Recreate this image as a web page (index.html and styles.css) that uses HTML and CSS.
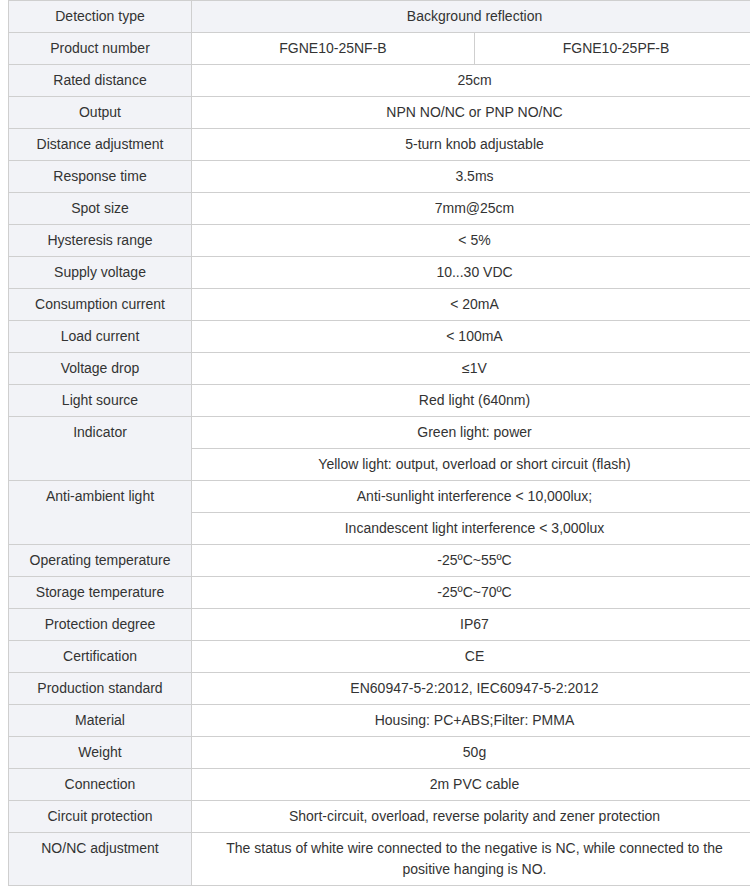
FILE: index.html
```html
<!DOCTYPE html>
<html>
<head>
<meta charset="utf-8">
<link rel="stylesheet" href="styles.css">
</head>
<body>
<table class="spec">
<colgroup><col class="c1"><col class="c2"><col class="c3"></colgroup>
<tbody>
<tr class="head"><td class="k">Detection type</td><td colspan="2">Background reflection</td></tr>
<tr><td class="k">Product number</td><td>FGNE10-25NF-B</td><td>FGNE10-25PF-B</td></tr>
<tr><td class="k">Rated distance</td><td colspan="2">25cm</td></tr>
<tr><td class="k">Output</td><td colspan="2">NPN NO/NC or PNP NO/NC</td></tr>
<tr><td class="k">Distance adjustment</td><td colspan="2">5-turn knob adjustable</td></tr>
<tr><td class="k">Response time</td><td colspan="2">3.5ms</td></tr>
<tr><td class="k">Spot size</td><td colspan="2">7mm@25cm</td></tr>
<tr><td class="k">Hysteresis range</td><td colspan="2">&lt; 5%</td></tr>
<tr><td class="k">Supply voltage</td><td colspan="2">10...30 VDC</td></tr>
<tr><td class="k">Consumption current</td><td colspan="2">&lt; 20mA</td></tr>
<tr><td class="k">Load current</td><td colspan="2">&lt; 100mA</td></tr>
<tr><td class="k">Voltage drop</td><td colspan="2">≤1V</td></tr>
<tr><td class="k">Light source</td><td colspan="2">Red light (640nm)</td></tr>
<tr><td class="k" rowspan="2">Indicator</td><td colspan="2">Green light: power</td></tr>
<tr><td colspan="2">Yellow light: output, overload or short circuit (flash)</td></tr>
<tr><td class="k" rowspan="2">Anti-ambient light</td><td colspan="2">Anti-sunlight interference &lt; 10,000lux;</td></tr>
<tr><td colspan="2">Incandescent light interference &lt; 3,000lux</td></tr>
<tr><td class="k">Operating temperature</td><td colspan="2">-25ºC~55ºC</td></tr>
<tr><td class="k">Storage temperature</td><td colspan="2">-25ºC~70ºC</td></tr>
<tr><td class="k">Protection degree</td><td colspan="2">IP67</td></tr>
<tr><td class="k">Certification</td><td colspan="2">CE</td></tr>
<tr><td class="k">Production standard</td><td colspan="2">EN60947-5-2:2012, IEC60947-5-2:2012</td></tr>
<tr><td class="k">Material</td><td colspan="2">Housing: PC+ABS;Filter: PMMA</td></tr>
<tr><td class="k">Weight</td><td colspan="2">50g</td></tr>
<tr><td class="k">Connection</td><td colspan="2">2m PVC cable</td></tr>
<tr><td class="k">Circuit protection</td><td colspan="2">Short-circuit, overload, reverse polarity and zener protection</td></tr>
<tr><td class="k">NO/NC adjustment</td><td colspan="2">The status of white wire connected to the negative is NC, while connected to the positive hanging is NO.</td></tr>
</tbody>
</table>
</body>
</html>
```

FILE: styles.css
```css
html { overflow: hidden; }
body {
  margin: 0 0 0 8px;
  background: #fff;
  font-family: "Liberation Sans", Arial, sans-serif;
  font-size: 14px;
  color: #333;
}
.spec {
  border-collapse: collapse;
  table-layout: fixed;
  width: 749px;
}
.c1 { width: 183px; }
.c2 { width: 283px; }
.c3 { width: 283px; }
.spec td {
  border: 1px solid #cfcfcf;
  padding: 5px 10px;
  line-height: 21px;
  text-align: center;
  vertical-align: top;
}
.spec td.k { background: #f2f3f7; }
.spec tr.head td { background: #f2f3f7; }
```
